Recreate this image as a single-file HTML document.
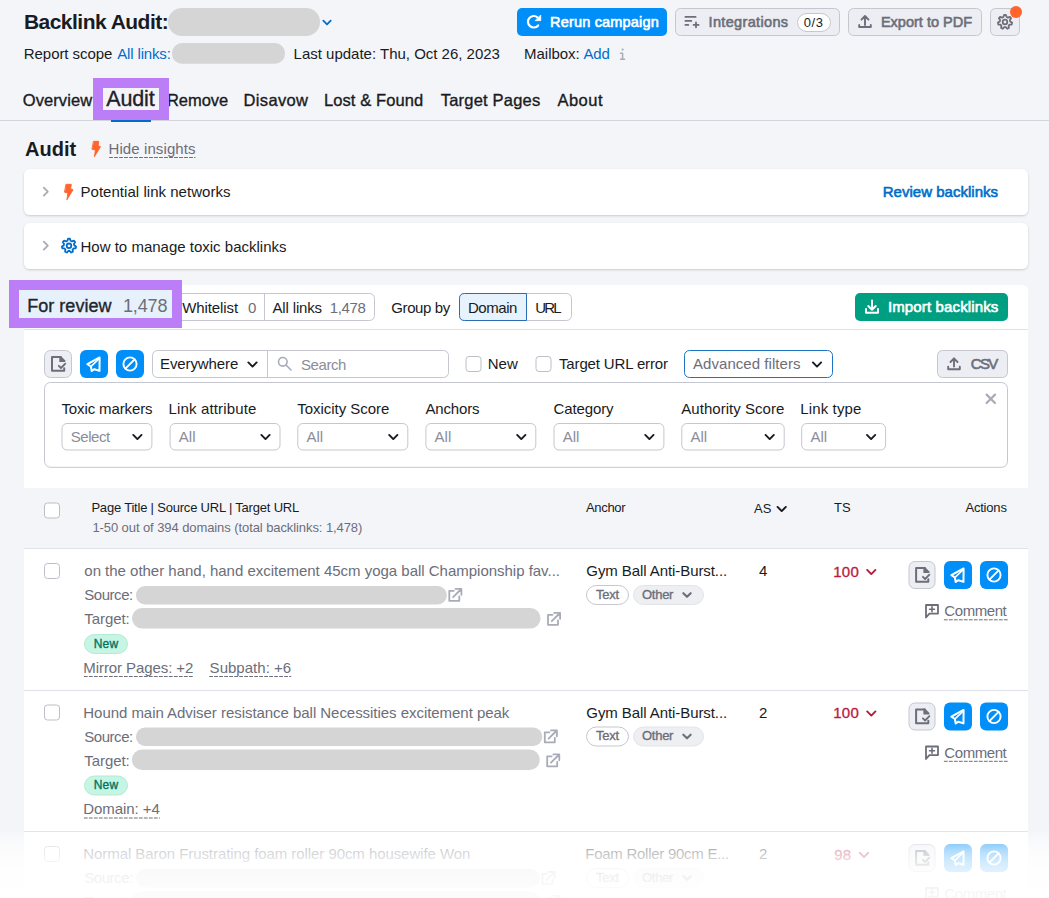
<!DOCTYPE html>
<html><head><meta charset="utf-8"><title>Backlink Audit</title>
<style>html,body{margin:0;padding:0;background:#f4f5f9;overflow:hidden}svg{display:block}text{font-family:"Liberation Sans",sans-serif;white-space:pre}</style>
</head><body>
<svg width="1049" height="898" viewBox="0 0 1049 898">
<rect x="0" y="0" width="1049" height="898" rx="0" fill="#f4f5f9" />
<rect x="0" y="887" width="1049" height="11" rx="0" fill="#fff" />
<text x="23.90" y="28.6" font-size="21" font-weight="700" fill="#191b23" textLength="144.79" lengthAdjust="spacing" >Backlink Audit:</text>
<rect x="168" y="8" width="152" height="28" rx="14" fill="#d5d5d5" />
<path d="M323.32,20.66 L327,24.34 L330.68,20.66" fill="none" stroke="#006dca" stroke-width="1.8399999999999999" stroke-linecap="round" stroke-linejoin="round" />
<text x="23.80" y="58.9" font-size="15" font-weight="400" fill="#191b23" textLength="88.54" lengthAdjust="spacing" >Report scope</text>
<text x="117.20" y="58.9" font-size="15" font-weight="400" fill="#006dca" textLength="53.67" lengthAdjust="spacing" >All links:</text>
<rect x="172" y="43" width="113" height="20.700000000000003" rx="10" fill="#d5d5d5" />
<text x="293.60" y="58.9" font-size="15" font-weight="400" fill="#191b23" textLength="206.34" lengthAdjust="spacing" >Last update: Thu, Oct 26, 2023</text>
<text x="524.10" y="58.9" font-size="15" font-weight="400" fill="#191b23" textLength="55.57" lengthAdjust="spacing" >Mailbox:</text>
<text x="583.60" y="58.9" font-size="15" font-weight="400" fill="#006dca" textLength="26.14" lengthAdjust="spacing" >Add</text>
<rect x="517" y="8" width="150" height="28" rx="5" fill="#008ff8" />
<text x="550.00" y="27" font-size="14.5" font-weight="400" fill="#fff" stroke="#fff" stroke-width="0.6" textLength="108.86" lengthAdjust="spacing" >Rerun campaign</text>
<path d="M538.15,25.45 A5.75,5.75 0 1 1 537.6,17.5" fill="none" stroke="#fff" stroke-width="2.2" stroke-linecap="round" stroke-linejoin="round" stroke-linecap="butt"/>
<path d="M535.6,20.6 L540.7,20.6 L540.7,15.4 Z" fill="#fff" stroke="#fff" stroke-width="0.9" stroke-linecap="round" stroke-linejoin="round" />
<rect x="675.5" y="8.5" width="164" height="27" rx="5" fill="#edeef3" stroke="#c4c7cf" stroke-width="1" />
<text x="708.60" y="27" font-size="14.5" font-weight="400" fill="#6c6e79" stroke="#6c6e79" stroke-width="0.6" textLength="79.46" lengthAdjust="spacing" >Integrations</text>
<path d="M685.4,16.9 H695.6 M685.4,20.9 H691.3 M685.4,24.9 H688.3 M693.6,24.9 H698.6 M696,22.5 V27.3" fill="none" stroke="#6c6e79" stroke-width="1.8" stroke-linecap="round" stroke-linejoin="round" />
<rect x="797.5" y="13.5" width="33" height="18" rx="9.5" fill="#fff" stroke="#c4c7cf" stroke-width="1" />
<text x="803.80" y="27" font-size="13" font-weight="400" fill="#191b23" textLength="19.13" lengthAdjust="spacing" >0/3</text>
<rect x="848.5" y="8.5" width="133" height="27" rx="5" fill="#edeef3" stroke="#c4c7cf" stroke-width="1" />
<text x="880.90" y="27" font-size="14.5" font-weight="400" fill="#6c6e79" stroke="#6c6e79" stroke-width="0.6" textLength="91.26" lengthAdjust="spacing" >Export to PDF</text>
<path d="M865,25 V16.2 M861.5,19.6 L865,16 L868.5,19.6 M859.2,25 V27 H870.8 V25" fill="none" stroke="#6c6e79" stroke-width="1.9" stroke-linecap="round" stroke-linejoin="round" />
<rect x="990.5" y="8.5" width="29" height="27" rx="5" fill="#edeef3" stroke="#c4c7cf" stroke-width="1" />
<path d="M1003.42,16.99 L1004.05,14.96 L1005.95,14.96 L1006.58,16.99 L1007.93,17.64 L1009.91,16.87 L1011.09,18.36 L1009.90,20.11 L1010.24,21.58 L1012.07,22.64 L1011.65,24.49 L1009.53,24.65 L1008.60,25.83 L1008.91,27.93 L1007.19,28.75 L1005.75,27.20 L1004.25,27.20 L1002.81,28.75 L1001.09,27.93 L1001.40,25.83 L1000.47,24.65 L998.35,24.49 L997.93,22.64 L999.76,21.58 L1000.10,20.11 L998.91,18.36 L1000.09,16.87 L1002.07,17.64 Z" fill="none" stroke="#6c6e79" stroke-width="1.8" stroke-linecap="round" stroke-linejoin="round" />
<circle cx="1005" cy="22" r="2.3" fill="none" stroke="#6c6e79" stroke-width="1.8"/>
<circle cx="1016" cy="12" r="6" fill="#ff642d"/>
<path d="M620.5,53.3 H622.6 V59 M620.6,59.3 H624.6" fill="none" stroke="#a9abb6" stroke-width="1.5" stroke-linecap="round" stroke-linejoin="round" stroke-linecap="butt" stroke-linejoin="miter"/>
<circle cx="622.6" cy="49.6" r="1.1" fill="#a9abb6"/>
<rect x="0" y="120" width="1049" height="1" rx="0" fill="#d1d4db" />
<text x="22.80" y="105.5" font-size="16.5" font-weight="400" fill="#191b23" stroke="#191b23" stroke-width="0.35" textLength="69.32" lengthAdjust="spacing" >Overview</text>
<text x="167.00" y="105.5" font-size="16.5" font-weight="400" fill="#191b23" stroke="#191b23" stroke-width="0.35" textLength="61.18" lengthAdjust="spacing" >Remove</text>
<text x="243.60" y="105.5" font-size="16.5" font-weight="400" fill="#191b23" stroke="#191b23" stroke-width="0.35" textLength="64.32" lengthAdjust="spacing" >Disavow</text>
<text x="324.00" y="105.5" font-size="16.5" font-weight="400" fill="#191b23" stroke="#191b23" stroke-width="0.35" textLength="99.18" lengthAdjust="spacing" >Lost &amp; Found</text>
<text x="440.70" y="105.5" font-size="16.5" font-weight="400" fill="#191b23" stroke="#191b23" stroke-width="0.35" textLength="99.55" lengthAdjust="spacing" >Target Pages</text>
<text x="557.40" y="105.5" font-size="16.5" font-weight="400" fill="#191b23" stroke="#191b23" stroke-width="0.35" textLength="45.18" lengthAdjust="spacing" >About</text>
<rect x="111" y="120" width="40" height="2" rx="0" fill="#006dca" />
<text x="25.00" y="155.7" font-size="20" font-weight="700" fill="#191b23" textLength="51.26" lengthAdjust="spacing" >Audit</text>
<text x="108.50" y="154.3" font-size="15" font-weight="400" fill="#6c6e79" textLength="87.00" lengthAdjust="spacing" >Hide insights</text>
<path d="M93.80,141.30 L98.80,141.30 L98.10,145.80 L100.50,146.70 L94.40,156.80 L95.40,150.10 L92.30,149.30 Z" fill="#ff642d" stroke="#ff642d" stroke-width="0.9" stroke-linecap="round" stroke-linejoin="round" />
<path d="M109.5,157.5 H195" fill="none" stroke="#6c6e79" stroke-width="1" stroke-linecap="round" stroke-linejoin="round" stroke-dasharray="3 2" stroke-linecap="butt"/>
<defs><filter id="sh" x="-5%" y="-20%" width="110%" height="150%"><feDropShadow dx="0" dy="1" stdDeviation="0.8" flood-color="#000" flood-opacity="0.18"/></filter><linearGradient id="fade" x1="0" y1="0" x2="0" y2="1"><stop offset="0.000" stop-color="#fff" stop-opacity="0.000"/><stop offset="0.044" stop-color="#fff" stop-opacity="0.162"/><stop offset="0.088" stop-color="#fff" stop-opacity="0.297"/><stop offset="0.147" stop-color="#fff" stop-opacity="0.442"/><stop offset="0.221" stop-color="#fff" stop-opacity="0.578"/><stop offset="0.294" stop-color="#fff" stop-opacity="0.678"/><stop offset="0.382" stop-color="#fff" stop-opacity="0.763"/><stop offset="0.471" stop-color="#fff" stop-opacity="0.821"/><stop offset="0.574" stop-color="#fff" stop-opacity="0.867"/><stop offset="0.676" stop-color="#fff" stop-opacity="0.896"/><stop offset="0.794" stop-color="#fff" stop-opacity="0.917"/><stop offset="0.897" stop-color="#fff" stop-opacity="0.929"/><stop offset="1.000" stop-color="#fff" stop-opacity="0.936"/></linearGradient></defs>
<rect x="24" y="169" width="1004" height="46" rx="6" fill="#fff" filter="url(#sh)"/>
<rect x="24" y="223" width="1004" height="46" rx="6" fill="#fff" filter="url(#sh)"/>
<path d="M43.8,187.6 L47.8,191.6 L43.8,195.6" fill="none" stroke="#a9abb6" stroke-width="1.8" stroke-linecap="round" stroke-linejoin="round" />
<path d="M43.8,241.6 L47.8,245.6 L43.8,249.6" fill="none" stroke="#a9abb6" stroke-width="1.8" stroke-linecap="round" stroke-linejoin="round" />
<text x="80.50" y="197.2" font-size="15" font-weight="400" fill="#191b23" textLength="150.00" lengthAdjust="spacing" >Potential link networks</text>
<path d="M66.30,184.30 L71.30,184.30 L70.60,188.80 L73.00,189.70 L66.90,199.80 L67.90,193.10 L64.80,192.30 Z" fill="#ff642d" stroke="#ff642d" stroke-width="0.9" stroke-linecap="round" stroke-linejoin="round" />
<text x="882.70" y="197" font-size="15" font-weight="400" fill="#006dca" stroke="#006dca" stroke-width="0.6" textLength="115.34" lengthAdjust="spacing" >Review backlinks</text>
<text x="80.50" y="251.5" font-size="15" font-weight="400" fill="#191b23" textLength="206.00" lengthAdjust="spacing" >How to manage toxic backlinks</text>
<path d="M67.42,240.79 L68.05,238.76 L69.95,238.76 L70.58,240.79 L71.93,241.44 L73.91,240.67 L75.09,242.16 L73.90,243.91 L74.24,245.38 L76.07,246.44 L75.65,248.29 L73.53,248.45 L72.60,249.63 L72.91,251.73 L71.19,252.55 L69.75,251.00 L68.25,251.00 L66.81,252.55 L65.09,251.73 L65.40,249.63 L64.47,248.45 L62.35,248.29 L61.93,246.44 L63.76,245.38 L64.10,243.91 L62.91,242.16 L64.09,240.67 L66.07,241.44 Z" fill="none" stroke="#006dca" stroke-width="1.8" stroke-linecap="round" stroke-linejoin="round" />
<circle cx="69" cy="245.8" r="2.3" fill="none" stroke="#006dca" stroke-width="1.8"/>
<path d="M24,291 Q24,285 30,285 H1022 Q1028,285 1028,291 V898 H24 Z" fill="#fff"/>
<rect x="24" y="329" width="1004" height="1" rx="0" fill="#e0e1e9" />
<rect x="172.5" y="293.5" width="202" height="27" rx="5" fill="#fff" stroke="#c4c7cf" stroke-width="1" />
<rect x="264" y="293" width="1" height="28" rx="0" fill="#c4c7cf" />
<text x="182.30" y="312.8" font-size="15" font-weight="400" fill="#191b23" textLength="55.77" lengthAdjust="spacing" >Whitelist</text>
<text x="248.00" y="312.8" font-size="15" font-weight="400" fill="#6c6e79" >0</text>
<text x="272.50" y="312.8" font-size="15" font-weight="400" fill="#191b23" textLength="49.60" lengthAdjust="spacing" >All links</text>
<text x="329.70" y="312.8" font-size="15" font-weight="400" fill="#6c6e79" textLength="36.14" lengthAdjust="spacing" >1,478</text>
<text x="391.30" y="312.8" font-size="15" font-weight="400" fill="#191b23" textLength="58.90" lengthAdjust="spacing" >Group by</text>
<rect x="459.5" y="293.5" width="112" height="27" rx="5" fill="#fff" stroke="#c4c7cf" stroke-width="1" />
<path d="M526.5,293.5 H464.5 Q459.5,293.5 459.5,298.5 V315.5 Q459.5,320.5 464.5,320.5 H526.5 Z" fill="#e6f2fd" stroke="#2a6db5" stroke-width="1"/>
<text x="468.00" y="312.8" font-size="15" font-weight="400" fill="#191b23" textLength="49.34" lengthAdjust="spacing" >Domain</text>
<text x="535.20" y="312.8" font-size="15" font-weight="400" fill="#191b23" textLength="26.44" lengthAdjust="spacing" >URL</text>
<rect x="855" y="293" width="153" height="28" rx="5" fill="#009f81" />
<text x="887.90" y="312" font-size="15" font-weight="400" fill="#fff" stroke="#fff" stroke-width="0.6" textLength="110.44" lengthAdjust="spacing" >Import backlinks</text>
<path d="M872,300.5 V309.5 M868.3,306 L872,309.7 L875.7,306 M866,309 V312.8 H878 V309" fill="none" stroke="#fff" stroke-width="2" stroke-linecap="round" stroke-linejoin="round" stroke-linecap="butt" stroke-linejoin="miter"/>
<rect x="44.5" y="350.5" width="27" height="27" rx="6" fill="#edeef3" stroke="#c4c7cf" stroke-width="1" />
<rect x="80" y="350" width="28" height="28" rx="6" fill="#008ff8" />
<rect x="116" y="350" width="28" height="28" rx="6" fill="#008ff8" />
<rect x="152.5" y="350.5" width="296" height="27" rx="5" fill="#fff" stroke="#c4c7cf" stroke-width="1" />
<rect x="267" y="350" width="1" height="28" rx="0" fill="#c4c7cf" />
<circle cx="282.8" cy="361.8" r="4.3" fill="none" stroke="#a9abb6" stroke-width="1.6"/>
<path d="M286,365 L291,370" fill="none" stroke="#a9abb6" stroke-width="1.6" stroke-linecap="round" stroke-linejoin="round" />
<path d="M60.7,357 H52.0 V370.8 H64.2 V368.2" fill="none" stroke="#6c6e79" stroke-width="2" stroke-linecap="round" stroke-linejoin="round" stroke-linejoin="miter" stroke-linecap="butt"/>
<path d="M59.3,356.1 H60.9 L65.3,360.5 V362 H59.3 Z" fill="#6c6e79" />
<path d="M58.8,365.8 L61.0,368 L65.3,363.7" fill="none" stroke="#6c6e79" stroke-width="1.8" stroke-linecap="round" stroke-linejoin="round" stroke-linejoin="miter" stroke-linecap="butt"/>
<path d="M99.6,357.4 L87.4,364.2 L90.9,366.5 L91.7,371 L94.4,369.2 L99.5,370.9 Z" fill="none" stroke="#fff" stroke-width="2" stroke-linecap="round" stroke-linejoin="round" />
<path d="M91,366.3 L98.3,359.5" fill="none" stroke="#fff" stroke-width="1.7" stroke-linecap="round" stroke-linejoin="round" />
<circle cx="130" cy="364" r="6.6" fill="none" stroke="#fff" stroke-width="1.9"/>
<path d="M134.6,359.4 L125.4,368.6" fill="none" stroke="#fff" stroke-width="1.9" stroke-linecap="round" stroke-linejoin="round" />
<text x="160.00" y="369" font-size="15" font-weight="400" fill="#191b23" textLength="78.34" lengthAdjust="spacing" >Everywhere</text>
<path d="M248.36,362.43 L252.5,366.57 L256.64,362.43" fill="none" stroke="#191b23" stroke-width="1.9549999999999998" stroke-linecap="round" stroke-linejoin="round" />
<text x="301.00" y="369.5" font-size="15" font-weight="400" fill="#8b8d98" textLength="45.34" lengthAdjust="spacing" >Search</text>
<rect x="466.0" y="356.5" width="15.0" height="15" rx="3" fill="#fff" stroke="#bcbfc8" stroke-width="1" />
<text x="487.70" y="369" font-size="15" font-weight="400" fill="#191b23" textLength="30.13" lengthAdjust="spacing" >New</text>
<rect x="536.0" y="356.5" width="15.0" height="15" rx="3" fill="#fff" stroke="#bcbfc8" stroke-width="1" />
<text x="559.00" y="369" font-size="15" font-weight="400" fill="#191b23" textLength="109.00" lengthAdjust="spacing" >Target URL error</text>
<rect x="684.5" y="350.5" width="148" height="27" rx="5" fill="#fff" stroke="#1b74c2" stroke-width="1" />
<text x="693.00" y="369" font-size="15" font-weight="400" fill="#6c6e79" textLength="107.50" lengthAdjust="spacing" >Advanced filters</text>
<path d="M812.86,362.43 L817,366.57 L821.14,362.43" fill="none" stroke="#191b23" stroke-width="1.9549999999999998" stroke-linecap="round" stroke-linejoin="round" />
<rect x="937.5" y="350.5" width="70" height="27" rx="5" fill="#edeef3" stroke="#c4c7cf" stroke-width="1" />
<text x="970.80" y="369" font-size="15" font-weight="400" fill="#6c6e79" stroke="#6c6e79" stroke-width="0.6" textLength="27.50" lengthAdjust="spacing" >CSV</text>
<path d="M954,366.5 V358.5 M950.5,362 L954,358.3 L957.5,362 M948.2,366.8 V369.2 H959.8 V366.8" fill="none" stroke="#6c6e79" stroke-width="1.9" stroke-linecap="round" stroke-linejoin="round" />
<rect x="44.5" y="382.5" width="963" height="84.80000000000001" rx="6" fill="#fff" stroke="#c4c7cf" stroke-width="1" />
<text x="61.50" y="414.3" font-size="15" font-weight="400" fill="#191b23" textLength="91.00" lengthAdjust="spacing" >Toxic markers</text>
<rect x="62.0" y="423.5" width="89.9" height="26.5" rx="5" fill="#fff" stroke="#c4c7cf" stroke-width="1" />
<text x="70.70" y="441.5" font-size="15" font-weight="400" fill="#8b8d98" textLength="39.47" lengthAdjust="spacing" >Select</text>
<path d="M133.26,434.93 L137.4,439.07 L141.54000000000002,434.93" fill="none" stroke="#191b23" stroke-width="1.9549999999999998" stroke-linecap="round" stroke-linejoin="round" />
<text x="168.60" y="414.3" font-size="15" font-weight="400" fill="#191b23" textLength="87.74" lengthAdjust="spacing" >Link attribute</text>
<rect x="170.1" y="423.5" width="109.9" height="26.5" rx="5" fill="#fff" stroke="#c4c7cf" stroke-width="1" />
<text x="178.80" y="441.5" font-size="15" font-weight="400" fill="#8b8d98" >All</text>
<path d="M261.36,434.93 L265.5,439.07 L269.64,434.93" fill="none" stroke="#191b23" stroke-width="1.9549999999999998" stroke-linecap="round" stroke-linejoin="round" />
<text x="297.30" y="414.3" font-size="15" font-weight="400" fill="#191b23" textLength="92.04" lengthAdjust="spacing" >Toxicity Score</text>
<rect x="297.8" y="423.5" width="110.0" height="26.5" rx="5" fill="#fff" stroke="#c4c7cf" stroke-width="1" />
<text x="306.50" y="441.5" font-size="15" font-weight="400" fill="#8b8d98" >All</text>
<path d="M389.16,434.93 L393.3,439.07 L397.44,434.93" fill="none" stroke="#191b23" stroke-width="1.9549999999999998" stroke-linecap="round" stroke-linejoin="round" />
<text x="425.40" y="414.3" font-size="15" font-weight="400" fill="#191b23" textLength="54.10" lengthAdjust="spacing" >Anchors</text>
<rect x="425.9" y="423.5" width="109.89999999999998" height="26.5" rx="5" fill="#fff" stroke="#c4c7cf" stroke-width="1" />
<text x="434.60" y="441.5" font-size="15" font-weight="400" fill="#8b8d98" >All</text>
<path d="M517.16,434.93 L521.3,439.07 L525.4399999999999,434.93" fill="none" stroke="#191b23" stroke-width="1.9549999999999998" stroke-linecap="round" stroke-linejoin="round" />
<text x="553.50" y="414.3" font-size="15" font-weight="400" fill="#191b23" textLength="60.00" lengthAdjust="spacing" >Category</text>
<rect x="554.0" y="423.5" width="109.89999999999998" height="26.5" rx="5" fill="#fff" stroke="#c4c7cf" stroke-width="1" />
<text x="562.70" y="441.5" font-size="15" font-weight="400" fill="#8b8d98" >All</text>
<path d="M645.26,434.93 L649.4,439.07 L653.54,434.93" fill="none" stroke="#191b23" stroke-width="1.9549999999999998" stroke-linecap="round" stroke-linejoin="round" />
<text x="681.30" y="414.3" font-size="15" font-weight="400" fill="#191b23" textLength="103.04" lengthAdjust="spacing" >Authority Score</text>
<rect x="681.8" y="423.5" width="102.40000000000009" height="26.5" rx="5" fill="#fff" stroke="#c4c7cf" stroke-width="1" />
<text x="690.50" y="441.5" font-size="15" font-weight="400" fill="#8b8d98" >All</text>
<path d="M765.5600000000001,434.93 L769.7,439.07 L773.84,434.93" fill="none" stroke="#191b23" stroke-width="1.9549999999999998" stroke-linecap="round" stroke-linejoin="round" />
<text x="800.20" y="414.3" font-size="15" font-weight="400" fill="#191b23" textLength="61.14" lengthAdjust="spacing" >Link type</text>
<rect x="801.7" y="423.5" width="83.89999999999998" height="26.5" rx="5" fill="#fff" stroke="#c4c7cf" stroke-width="1" />
<text x="810.40" y="441.5" font-size="15" font-weight="400" fill="#8b8d98" >All</text>
<path d="M866.96,434.93 L871.1,439.07 L875.24,434.93" fill="none" stroke="#191b23" stroke-width="1.9549999999999998" stroke-linecap="round" stroke-linejoin="round" />
<path d="M986.6,394.6 L995,403 M995,394.6 L986.6,403" fill="none" stroke="#a9abb6" stroke-width="2.2" stroke-linecap="round" stroke-linejoin="round" />
<rect x="24" y="488" width="1004" height="60" rx="0" fill="#f4f5f9" />
<rect x="24" y="548" width="1004" height="1" rx="0" fill="#e0e1e9" />
<rect x="44.5" y="503.0" width="15" height="15.0" rx="3" fill="#fff" stroke="#bcbfc8" stroke-width="1" />
<text x="91.40" y="512.4" font-size="13" font-weight="400" fill="#191b23" textLength="207.83" lengthAdjust="spacing" >Page Title | Source URL | Target URL</text>
<text x="92.40" y="532" font-size="13" font-weight="400" fill="#6c6e79" textLength="269.93" lengthAdjust="spacing" >1-50 out of 394 domains (total backlinks: 1,478)</text>
<text x="586.00" y="512" font-size="13" font-weight="400" fill="#191b23" textLength="39.53" lengthAdjust="spacing" >Anchor</text>
<text x="754.00" y="513" font-size="13" font-weight="400" fill="#191b23" >AS</text>
<path d="M777.5600000000001,506.93 L781.7,511.07 L785.84,506.93" fill="none" stroke="#191b23" stroke-width="1.9549999999999998" stroke-linecap="round" stroke-linejoin="round" />
<text x="834.00" y="512" font-size="13" font-weight="400" fill="#191b23" >TS</text>
<text x="965.40" y="512" font-size="13" font-weight="400" fill="#191b23" textLength="41.50" lengthAdjust="spacing" >Actions</text>
<rect x="44.5" y="563.5" width="15" height="15" rx="3" fill="#fff" stroke="#bcbfc8" stroke-width="1" />
<text x="84.30" y="576.3" font-size="15" font-weight="400" fill="#6c6e79" textLength="475.67" lengthAdjust="spacing" >on the other hand, hand excitement 45cm yoga ball Championship fav...</text>
<text x="84.30" y="600" font-size="15" font-weight="400" fill="#6c6e79" textLength="48.87" lengthAdjust="spacing" >Source:</text>
<rect x="136" y="586" width="310.8" height="18.5" rx="9" fill="#d5d5d5" />
<path d="M453.8,590.8 H449.3 V600.8 H459.3 V596.3" fill="none" stroke="#a9abb6" stroke-width="1.8" stroke-linecap="round" stroke-linejoin="round" stroke-linejoin="miter" stroke-linecap="butt"/>
<path d="M455.5,588.9 H461.40000000000003 V594.8 M461.3,589 L453.1,597.2" fill="none" stroke="#a9abb6" stroke-width="1.8" stroke-linecap="round" stroke-linejoin="round" stroke-linejoin="miter" stroke-linecap="butt"/>
<text x="84.30" y="624" font-size="15" font-weight="400" fill="#6c6e79" textLength="45.37" lengthAdjust="spacing" >Target:</text>
<rect x="132" y="608" width="408.5" height="20.5" rx="10" fill="#d5d5d5" />
<path d="M552.5,614.8 H548.0 V624.8 H558.0 V620.3" fill="none" stroke="#a9abb6" stroke-width="1.8" stroke-linecap="round" stroke-linejoin="round" stroke-linejoin="miter" stroke-linecap="butt"/>
<path d="M554.2,612.9 H560.1 V618.8 M560.0,613 L551.8,621.2" fill="none" stroke="#a9abb6" stroke-width="1.8" stroke-linecap="round" stroke-linejoin="round" stroke-linejoin="miter" stroke-linecap="butt"/>
<rect x="84.5" y="634.5" width="43" height="19" rx="10" fill="#c6f5e4" stroke="#b3ead6" stroke-width="1" />
<text x="93.70" y="647.7" font-size="12" font-weight="400" fill="#00735e" stroke="#00735e" stroke-width="0.35" textLength="24.47" lengthAdjust="spacing" >New</text>
<text x="83.30" y="672.5" font-size="15" font-weight="400" fill="#6c6e79" textLength="110.04" lengthAdjust="spacing" >Mirror Pages: +2</text>
<path d="M84.3,676.5 H193" fill="none" stroke="#6c6e79" stroke-width="1" stroke-linecap="round" stroke-linejoin="round" stroke-dasharray="3 2" stroke-linecap="butt"/>
<text x="209.60" y="672.5" font-size="15" font-weight="400" fill="#6c6e79" textLength="81.54" lengthAdjust="spacing" >Subpath: +6</text>
<path d="M209.6,676.5 H290.8" fill="none" stroke="#6c6e79" stroke-width="1" stroke-linecap="round" stroke-linejoin="round" stroke-dasharray="3 2" stroke-linecap="butt"/>
<text x="586.30" y="576.4" font-size="15" font-weight="400" fill="#191b23" textLength="140.87" lengthAdjust="spacing" >Gym Ball Anti-Burst...</text>
<rect x="586.5" y="585.5" width="42" height="19" rx="10" fill="#fff" stroke="#c4c7cf" stroke-width="1" />
<text x="596.00" y="598.7" font-size="13" font-weight="400" fill="#6c6e79" stroke="#6c6e79" stroke-width="0.35" textLength="23.01" lengthAdjust="spacing" >Text</text>
<rect x="633.5" y="585.5" width="70" height="19" rx="10" fill="#eeeff3" stroke="#e3e4ea" stroke-width="1" />
<text x="642.00" y="598.7" font-size="13" font-weight="400" fill="#6c6e79" stroke="#6c6e79" stroke-width="0.35" textLength="31.43" lengthAdjust="spacing" >Other</text>
<path d="M683.32,593.16 L687,596.84 L690.68,593.16" fill="none" stroke="#6c6e79" stroke-width="2.07" stroke-linecap="round" stroke-linejoin="round" />
<text x="759.00" y="576" font-size="15" font-weight="400" fill="#191b23" >4</text>
<text x="833.30" y="576.7" font-size="15" font-weight="400" fill="#b81d3e" stroke="#b81d3e" stroke-width="0.35" textLength="25.44" lengthAdjust="spacing" >100</text>
<path d="M867.16,569.93 L871.3,574.07 L875.4399999999999,569.93" fill="none" stroke="#b81d3e" stroke-width="1.9549999999999998" stroke-linecap="round" stroke-linejoin="round" />
<rect x="909.0" y="561.5" width="26.0" height="27" rx="6" fill="#edeef3" stroke="#c4c7cf" stroke-width="1" />
<rect x="944" y="561" width="28" height="28" rx="6" fill="#008ff8" />
<rect x="980" y="561" width="28" height="28" rx="6" fill="#008ff8" />
<path d="M924.8,568 H916.1 V581.8 H928.3 V579.2" fill="none" stroke="#6c6e79" stroke-width="2" stroke-linecap="round" stroke-linejoin="round" stroke-linejoin="miter" stroke-linecap="butt"/>
<path d="M923.4,567.1 H925 L929.4,571.5 V573 H923.4 Z" fill="#6c6e79" />
<path d="M922.9,576.8 L925.1,579 L929.4,574.7" fill="none" stroke="#6c6e79" stroke-width="1.8" stroke-linecap="round" stroke-linejoin="round" stroke-linejoin="miter" stroke-linecap="butt"/>
<path d="M963.6,568.4 L951.4,575.2 L954.9,577.5 L955.7,582 L958.4,580.2 L963.5,581.9 Z" fill="none" stroke="#fff" stroke-width="2" stroke-linecap="round" stroke-linejoin="round" />
<path d="M955,577.3 L962.3,570.5" fill="none" stroke="#fff" stroke-width="1.7" stroke-linecap="round" stroke-linejoin="round" />
<circle cx="994" cy="575" r="6.6" fill="none" stroke="#fff" stroke-width="1.9"/>
<path d="M998.6,570.4 L989.4,579.6" fill="none" stroke="#fff" stroke-width="1.9" stroke-linecap="round" stroke-linejoin="round" />
<path d="M926,617.5 V605 H938 V613.6 H929.4 Z" fill="none" stroke="#6c6e79" stroke-width="1.8" stroke-linecap="round" stroke-linejoin="round" stroke-linejoin="miter"/>
<path d="M932,606.8 V611.8 M929.5,609.3 H934.5" fill="none" stroke="#6c6e79" stroke-width="1.6" stroke-linecap="round" stroke-linejoin="round" stroke-linecap="butt"/>
<text x="944.30" y="616.2" font-size="15" font-weight="400" fill="#6c6e79" textLength="62.47" lengthAdjust="spacing" >Comment</text>
<path d="M944.3,619.8 H1007.6" fill="none" stroke="#6c6e79" stroke-width="1" stroke-linecap="round" stroke-linejoin="round" stroke-dasharray="3 2" stroke-linecap="butt"/>
<rect x="24" y="690" width="1004" height="1" rx="0" fill="#e0e1e9" />
<rect x="44.5" y="705.0" width="15" height="15.0" rx="3" fill="#fff" stroke="#bcbfc8" stroke-width="1" />
<text x="83.30" y="717.8" font-size="15" font-weight="400" fill="#6c6e79" textLength="426.00" lengthAdjust="spacing" >Hound main Adviser resistance ball Necessities excitement peak</text>
<text x="84.30" y="741.5" font-size="15" font-weight="400" fill="#6c6e79" textLength="48.87" lengthAdjust="spacing" >Source:</text>
<rect x="136" y="727.5" width="406.29999999999995" height="18.5" rx="9" fill="#d5d5d5" />
<path d="M549.3,732.3 H544.8 V742.3 H554.8 V737.8" fill="none" stroke="#a9abb6" stroke-width="1.8" stroke-linecap="round" stroke-linejoin="round" stroke-linejoin="miter" stroke-linecap="butt"/>
<path d="M551.0,730.4 H556.9 V736.3 M556.8,730.5 L548.5999999999999,738.7" fill="none" stroke="#a9abb6" stroke-width="1.8" stroke-linecap="round" stroke-linejoin="round" stroke-linejoin="miter" stroke-linecap="butt"/>
<text x="84.30" y="765.5" font-size="15" font-weight="400" fill="#6c6e79" textLength="45.37" lengthAdjust="spacing" >Target:</text>
<rect x="132" y="749.5" width="407.70000000000005" height="20.5" rx="10" fill="#d5d5d5" />
<path d="M551.7,756.3 H547.2 V766.3 H557.2 V761.8" fill="none" stroke="#a9abb6" stroke-width="1.8" stroke-linecap="round" stroke-linejoin="round" stroke-linejoin="miter" stroke-linecap="butt"/>
<path d="M553.4000000000001,754.4 H559.3000000000001 V760.3 M559.2,754.5 L551.0,762.7" fill="none" stroke="#a9abb6" stroke-width="1.8" stroke-linecap="round" stroke-linejoin="round" stroke-linejoin="miter" stroke-linecap="butt"/>
<rect x="84.5" y="776.0" width="43" height="19.0" rx="10" fill="#c6f5e4" stroke="#b3ead6" stroke-width="1" />
<text x="93.70" y="789.2" font-size="12" font-weight="400" fill="#00735e" stroke="#00735e" stroke-width="0.35" textLength="24.47" lengthAdjust="spacing" >New</text>
<text x="83.30" y="814.0" font-size="15" font-weight="400" fill="#6c6e79" textLength="76.54" lengthAdjust="spacing" >Domain: +4</text>
<path d="M84.3,818.0 H159.5" fill="none" stroke="#6c6e79" stroke-width="1" stroke-linecap="round" stroke-linejoin="round" stroke-dasharray="3 2" stroke-linecap="butt"/>
<text x="586.30" y="717.9" font-size="15" font-weight="400" fill="#191b23" textLength="140.87" lengthAdjust="spacing" >Gym Ball Anti-Burst...</text>
<rect x="586.5" y="727.0" width="42" height="19.0" rx="10" fill="#fff" stroke="#c4c7cf" stroke-width="1" />
<text x="596.00" y="740.2" font-size="13" font-weight="400" fill="#6c6e79" stroke="#6c6e79" stroke-width="0.35" textLength="23.01" lengthAdjust="spacing" >Text</text>
<rect x="633.5" y="727.0" width="70" height="19.0" rx="10" fill="#eeeff3" stroke="#e3e4ea" stroke-width="1" />
<text x="642.00" y="740.2" font-size="13" font-weight="400" fill="#6c6e79" stroke="#6c6e79" stroke-width="0.35" textLength="31.43" lengthAdjust="spacing" >Other</text>
<path d="M683.32,734.66 L687,738.34 L690.68,734.66" fill="none" stroke="#6c6e79" stroke-width="2.07" stroke-linecap="round" stroke-linejoin="round" />
<text x="759.00" y="717.5" font-size="15" font-weight="400" fill="#191b23" >2</text>
<text x="833.30" y="718.2" font-size="15" font-weight="400" fill="#b81d3e" stroke="#b81d3e" stroke-width="0.35" textLength="25.44" lengthAdjust="spacing" >100</text>
<path d="M867.16,711.43 L871.3,715.57 L875.4399999999999,711.43" fill="none" stroke="#b81d3e" stroke-width="1.9549999999999998" stroke-linecap="round" stroke-linejoin="round" />
<rect x="909.0" y="703.0" width="26.0" height="27.0" rx="6" fill="#edeef3" stroke="#c4c7cf" stroke-width="1" />
<rect x="944" y="702.5" width="28" height="28.0" rx="6" fill="#008ff8" />
<rect x="980" y="702.5" width="28" height="28.0" rx="6" fill="#008ff8" />
<path d="M924.8,709.5 H916.1 V723.3 H928.3 V720.7" fill="none" stroke="#6c6e79" stroke-width="2" stroke-linecap="round" stroke-linejoin="round" stroke-linejoin="miter" stroke-linecap="butt"/>
<path d="M923.4,708.6 H925 L929.4,713.0 V714.5 H923.4 Z" fill="#6c6e79" />
<path d="M922.9,718.3 L925.1,720.5 L929.4,716.2" fill="none" stroke="#6c6e79" stroke-width="1.8" stroke-linecap="round" stroke-linejoin="round" stroke-linejoin="miter" stroke-linecap="butt"/>
<path d="M963.6,709.9 L951.4,716.7 L954.9,719.0 L955.7,723.5 L958.4,721.7 L963.5,723.4 Z" fill="none" stroke="#fff" stroke-width="2" stroke-linecap="round" stroke-linejoin="round" />
<path d="M955,718.8 L962.3,712.0" fill="none" stroke="#fff" stroke-width="1.7" stroke-linecap="round" stroke-linejoin="round" />
<circle cx="994" cy="716.5" r="6.6" fill="none" stroke="#fff" stroke-width="1.9"/>
<path d="M998.6,711.9 L989.4,721.1" fill="none" stroke="#fff" stroke-width="1.9" stroke-linecap="round" stroke-linejoin="round" />
<path d="M926,759.0 V746.5 H938 V755.1 H929.4 Z" fill="none" stroke="#6c6e79" stroke-width="1.8" stroke-linecap="round" stroke-linejoin="round" stroke-linejoin="miter"/>
<path d="M932,748.3 V753.3 M929.5,750.8 H934.5" fill="none" stroke="#6c6e79" stroke-width="1.6" stroke-linecap="round" stroke-linejoin="round" stroke-linecap="butt"/>
<text x="944.30" y="757.7" font-size="15" font-weight="400" fill="#6c6e79" textLength="62.47" lengthAdjust="spacing" >Comment</text>
<path d="M944.3,761.3 H1007.6" fill="none" stroke="#6c6e79" stroke-width="1" stroke-linecap="round" stroke-linejoin="round" stroke-dasharray="3 2" stroke-linecap="butt"/>
<rect x="24" y="831" width="1004" height="1" rx="0" fill="#e0e1e9" />
<rect x="44.5" y="846.5" width="15" height="15" rx="3" fill="#fff" stroke="#bcbfc8" stroke-width="1" />
<text x="83.30" y="859.3" font-size="15" font-weight="400" fill="#6c6e79" textLength="387.04" lengthAdjust="spacing" >Normal Baron Frustrating foam roller 90cm housewife Won</text>
<text x="84.30" y="883" font-size="15" font-weight="400" fill="#6c6e79" textLength="48.87" lengthAdjust="spacing" >Source:</text>
<rect x="136" y="869" width="404" height="18.5" rx="9" fill="#d5d5d5" />
<path d="M547.0,873.8 H542.5 V883.8 H552.5 V879.3" fill="none" stroke="#a9abb6" stroke-width="1.8" stroke-linecap="round" stroke-linejoin="round" stroke-linejoin="miter" stroke-linecap="butt"/>
<path d="M548.7,871.9 H554.6 V877.8 M554.5,872 L546.3,880.2" fill="none" stroke="#a9abb6" stroke-width="1.8" stroke-linecap="round" stroke-linejoin="round" stroke-linejoin="miter" stroke-linecap="butt"/>
<text x="84.30" y="907" font-size="15" font-weight="400" fill="#6c6e79" textLength="45.37" lengthAdjust="spacing" >Target:</text>
<rect x="132" y="891" width="408" height="20.5" rx="10" fill="#d5d5d5" />
<path d="M552.0,897.8 H547.5 V907.8 H557.5 V903.3" fill="none" stroke="#a9abb6" stroke-width="1.8" stroke-linecap="round" stroke-linejoin="round" stroke-linejoin="miter" stroke-linecap="butt"/>
<path d="M553.7,895.9 H559.6 V901.8 M559.5,896 L551.3,904.2" fill="none" stroke="#a9abb6" stroke-width="1.8" stroke-linecap="round" stroke-linejoin="round" stroke-linejoin="miter" stroke-linecap="butt"/>
<rect x="84.5" y="917.5" width="43" height="19" rx="10" fill="#c6f5e4" stroke="#b3ead6" stroke-width="1" />
<text x="93.70" y="930.7" font-size="12" font-weight="400" fill="#00735e" stroke="#00735e" stroke-width="0.35" textLength="24.47" lengthAdjust="spacing" >New</text>
<text x="83.30" y="955.5" font-size="15" font-weight="400" fill="#6c6e79" textLength="76.54" lengthAdjust="spacing" >Domain: +4</text>
<path d="M84.3,959.5 H159.5" fill="none" stroke="#6c6e79" stroke-width="1" stroke-linecap="round" stroke-linejoin="round" stroke-dasharray="3 2" stroke-linecap="butt"/>
<text x="585.30" y="859.4" font-size="15" font-weight="400" fill="#191b23" textLength="143.87" lengthAdjust="spacing" >Foam Roller 90cm E...</text>
<rect x="586.5" y="868.5" width="42" height="19" rx="10" fill="#fff" stroke="#c4c7cf" stroke-width="1" />
<text x="596.00" y="881.7" font-size="13" font-weight="400" fill="#6c6e79" stroke="#6c6e79" stroke-width="0.35" textLength="23.01" lengthAdjust="spacing" >Text</text>
<rect x="633.5" y="868.5" width="70" height="19" rx="10" fill="#eeeff3" stroke="#e3e4ea" stroke-width="1" />
<text x="642.00" y="881.7" font-size="13" font-weight="400" fill="#6c6e79" stroke="#6c6e79" stroke-width="0.35" textLength="31.43" lengthAdjust="spacing" >Other</text>
<path d="M683.32,876.16 L687,879.84 L690.68,876.16" fill="none" stroke="#6c6e79" stroke-width="2.07" stroke-linecap="round" stroke-linejoin="round" />
<text x="759.00" y="859" font-size="15" font-weight="400" fill="#191b23" >2</text>
<text x="834.30" y="859.7" font-size="15" font-weight="400" fill="#b81d3e" stroke="#b81d3e" stroke-width="0.35" >98</text>
<path d="M859.86,852.93 L864,857.07 L868.14,852.93" fill="none" stroke="#b81d3e" stroke-width="1.9549999999999998" stroke-linecap="round" stroke-linejoin="round" />
<rect x="909.0" y="844.5" width="26.0" height="27" rx="6" fill="#edeef3" stroke="#c4c7cf" stroke-width="1" />
<rect x="944" y="844" width="28" height="28" rx="6" fill="#008ff8" />
<rect x="980" y="844" width="28" height="28" rx="6" fill="#008ff8" />
<path d="M924.8,851 H916.1 V864.8 H928.3 V862.2" fill="none" stroke="#6c6e79" stroke-width="2" stroke-linecap="round" stroke-linejoin="round" stroke-linejoin="miter" stroke-linecap="butt"/>
<path d="M923.4,850.1 H925 L929.4,854.5 V856 H923.4 Z" fill="#6c6e79" />
<path d="M922.9,859.8 L925.1,862 L929.4,857.7" fill="none" stroke="#6c6e79" stroke-width="1.8" stroke-linecap="round" stroke-linejoin="round" stroke-linejoin="miter" stroke-linecap="butt"/>
<path d="M963.6,851.4 L951.4,858.2 L954.9,860.5 L955.7,865 L958.4,863.2 L963.5,864.9 Z" fill="none" stroke="#fff" stroke-width="2" stroke-linecap="round" stroke-linejoin="round" />
<path d="M955,860.3 L962.3,853.5" fill="none" stroke="#fff" stroke-width="1.7" stroke-linecap="round" stroke-linejoin="round" />
<circle cx="994" cy="858" r="6.6" fill="none" stroke="#fff" stroke-width="1.9"/>
<path d="M998.6,853.4 L989.4,862.6" fill="none" stroke="#fff" stroke-width="1.9" stroke-linecap="round" stroke-linejoin="round" />
<path d="M926,900.5 V888 H938 V896.6 H929.4 Z" fill="none" stroke="#6c6e79" stroke-width="1.8" stroke-linecap="round" stroke-linejoin="round" stroke-linejoin="miter"/>
<path d="M932,889.8 V894.8 M929.5,892.3 H934.5" fill="none" stroke="#6c6e79" stroke-width="1.6" stroke-linecap="round" stroke-linejoin="round" stroke-linecap="butt"/>
<text x="944.30" y="899.2" font-size="15" font-weight="400" fill="#6c6e79" textLength="62.47" lengthAdjust="spacing" >Comment</text>
<path d="M944.3,902.8 H1007.6" fill="none" stroke="#6c6e79" stroke-width="1" stroke-linecap="round" stroke-linejoin="round" stroke-dasharray="3 2" stroke-linecap="butt"/>
<rect x="24" y="973" width="1004" height="1" rx="0" fill="#e0e1e9" />
<rect x="0" y="830" width="1049" height="68" rx="0" fill="url(#fade)" />
<rect x="93" y="78" width="76" height="42" rx="0" fill="#bc7ef7" />
<rect x="103" y="88" width="56" height="22" rx="0" fill="#f4f4f8" />
<text x="106.20" y="106.2" font-size="21.5" font-weight="400" fill="#1f2129" stroke="#1f2129" stroke-width="0.35" textLength="48.57" lengthAdjust="spacing" >Audit</text>
<rect x="9" y="280" width="173" height="48" rx="0" fill="#bc7ef7" />
<rect x="19" y="290" width="153" height="28" rx="0" fill="#e6f1fc" />
<text x="27.20" y="312" font-size="18" font-weight="400" fill="#23252d" stroke="#23252d" stroke-width="0.35" textLength="84.30" lengthAdjust="spacing" >For review</text>
<text x="123.00" y="312" font-size="18" font-weight="400" fill="#6c6e79" textLength="44.41" lengthAdjust="spacing" >1,478</text>
</svg>
</body></html>
